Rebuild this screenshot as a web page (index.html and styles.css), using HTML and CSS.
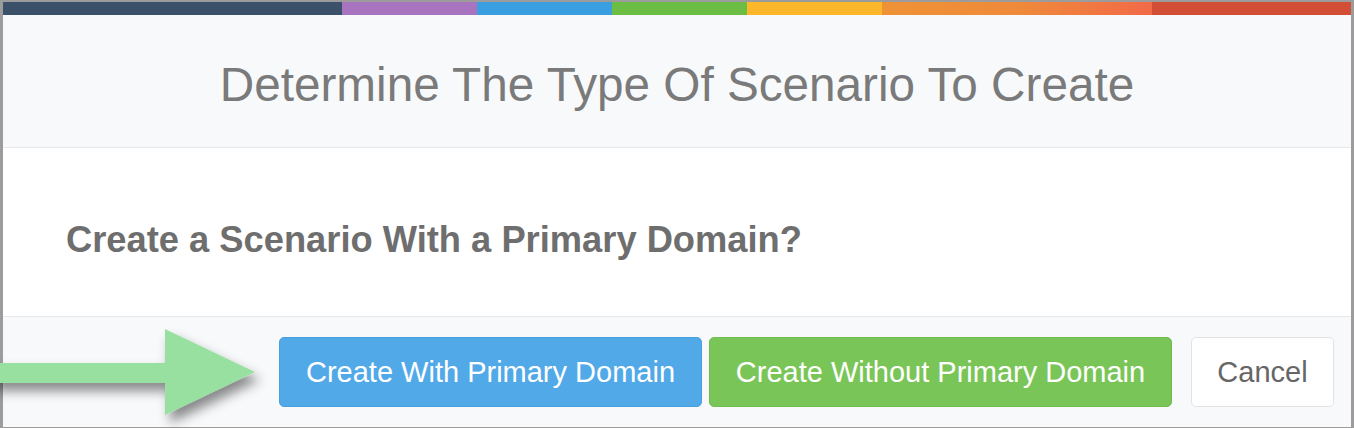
FILE: index.html
```html
<!DOCTYPE html>
<html lang="en">
<head>
<meta charset="utf-8">
<title>Determine The Type Of Scenario To Create</title>
<link rel="stylesheet" href="styles.css">
</head>
<body>
<div class="modal">
  <div class="color-bar">
    <span class="seg seg-slate"></span>
    <span class="seg seg-purple"></span>
    <span class="seg seg-blue"></span>
    <span class="seg seg-green"></span>
    <span class="seg seg-yellow"></span>
    <span class="seg seg-orange"></span>
    <span class="seg seg-red"></span>
  </div>
  <div class="modal-header">
    <h1 class="modal-title">Determine The Type Of Scenario To Create</h1>
  </div>
  <div class="modal-body">
    <p class="question">Create a Scenario With a Primary Domain?</p>
  </div>
  <div class="modal-footer">
    <button class="btn btn-primary">Create With Primary Domain</button>
    <button class="btn btn-success">Create Without Primary Domain</button>
    <button class="btn btn-default">Cancel</button>
  </div>
</div>
<svg class="pointer-arrow" width="280" height="120" viewBox="0 320 280 120" aria-hidden="true">
  <defs>
    <filter id="arrowShadow" x="-20%" y="-30%" width="150%" height="180%">
      <feDropShadow dx="5" dy="8" stdDeviation="6" flood-color="#000" flood-opacity="0.45"/>
    </filter>
  </defs>
  <polygon points="-10,363 165,363 165,329 255,372 165,415 165,383 -10,383" fill="#98e0a0" filter="url(#arrowShadow)"/>
</svg>
</body>
</html>
```
FILE: styles.css
```css
html, body {
  margin: 0;
  padding: 0;
}
body {
  background: #9c9c9c;
  width: 1354px;
  height: 428px;
  overflow: hidden;
  position: relative;
  font-family: "Liberation Sans", Arial, Helvetica, sans-serif;
}
.modal {
  margin: 2px 3px 0 3px;
  background: #fff;
  height: 425px;
  display: flex;
  flex-direction: column;
}
.color-bar {
  display: flex;
  height: 13px;
  flex: none;
}
.seg { display: block; height: 100%; }
.seg-slate { width: 339px; background: #3b5169; }
.seg-purple { width: 135px; background: #a874bf; }
.seg-blue { width: 135px; background: #3a9fe0; }
.seg-green { width: 135px; background: #6bbd44; }
.seg-yellow { width: 135px; background: #fdb72b; }
.seg-orange { width: 270px; background: linear-gradient(90deg, #ef9235 0%, #ef8a3a 50%, #f26a48 100%); }
.seg-red { flex: 1; background: #d24f35; }

.modal-header {
  height: 133px;
  background: #f8f9fb;
  border-bottom: 1px solid #e6e7e9;
  display: flex;
  align-items: center;
  justify-content: center;
  padding-top: 6px;
  box-sizing: border-box;
  flex: none;
}
.modal-title {
  margin: 0;
  font-size: 47.7px;
  font-weight: 400;
  color: #7a7a7a;
  letter-spacing: 0;
}
.modal-body {
  height: 169px;
  box-sizing: border-box;
  padding: 15px 0 0 63px;
  display: flex;
  align-items: center;
  border-bottom: 1px solid #e6e7e9;
  flex: none;
}
.question {
  margin: 0;
  font-size: 36.3px;
  font-weight: 700;
  color: #6e6e6e;
}
.modal-footer {
  flex: 1;
  background: #f8f9fb;
  display: flex;
  justify-content: flex-end;
  align-items: flex-start;
  padding: 20px 17px 0 0;
}
.btn {
  height: 70px;
  padding: 0;
  font-family: "Liberation Sans", Arial, Helvetica, sans-serif;
  font-size: 29px;
  border-radius: 5px;
  border: 1px solid transparent;
  cursor: pointer;
}
.btn-primary {
  background: #52a9e8;
  border-color: #4aa0df;
  color: #fff;
  width: 423px;
}
.btn-success {
  background: #7ac558;
  border-color: #72bd50;
  color: #fff;
  margin-left: 7px;
  width: 463px;
}
.btn-default {
  background: #fff;
  border-color: #e2e3e5;
  color: #666;
  margin-left: 19px;
  width: 143px;
}
.pointer-arrow {
  position: absolute;
  left: 0;
  top: 320px;
}
```
